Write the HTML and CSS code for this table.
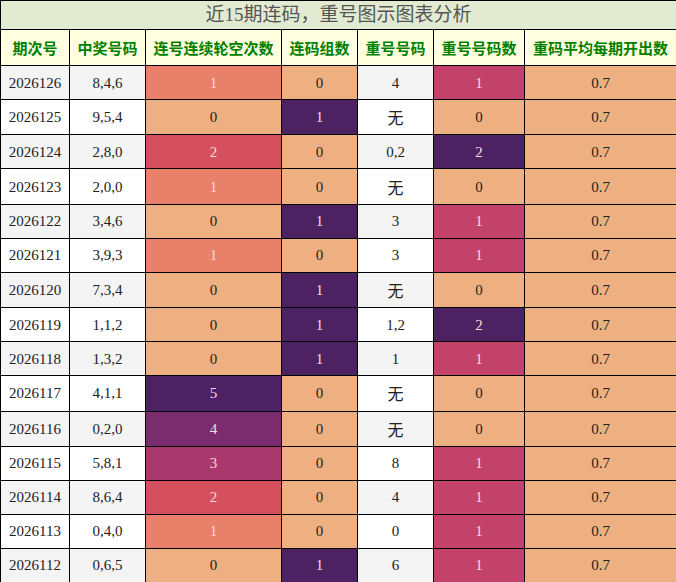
FILE: index.html
```html
<!DOCTYPE html>
<html lang="zh">
<head>
<meta charset="utf-8">
<title>近15期连码，重号图示图表分析</title>
<link rel="stylesheet" href="styles.css">
</head>
<body>
<table class="chart">
  <colgroup>
    <col class="c1"><col class="c2"><col class="c3"><col class="c4"><col class="c5"><col class="c6"><col class="c7">
  </colgroup>
  <thead>
    <tr class="title-row"><th colspan="7" class="title">近15期连码，重号图示图表分析</th></tr>
    <tr class="head-row">
      <th>期次号</th><th>中奖号码</th><th>连号连续轮空次数</th><th>连码组数</th><th>重号号码</th><th>重号号码数</th><th>重码平均每期开出数</th>
    </tr>
  </thead>
  <tbody>
    <tr class="odd"><td>2026126</td><td>8,4,6</td><td class="h1 lt">1</td><td class="h0">0</td><td>4</td><td class="p1 lt">1</td><td class="h0">0.7</td></tr>
    <tr class="even tall"><td>2026125</td><td>9,5,4</td><td class="h0">0</td><td class="d lt">1</td><td class="cjk">无</td><td class="h0">0</td><td class="h0">0.7</td></tr>
    <tr class="odd"><td>2026124</td><td>2,8,0</td><td class="h2 lt">2</td><td class="h0">0</td><td>0,2</td><td class="d lt">2</td><td class="h0">0.7</td></tr>
    <tr class="even tall"><td>2026123</td><td>2,0,0</td><td class="h1 lt">1</td><td class="h0">0</td><td class="cjk">无</td><td class="h0">0</td><td class="h0">0.7</td></tr>
    <tr class="odd"><td>2026122</td><td>3,4,6</td><td class="h0">0</td><td class="d lt">1</td><td>3</td><td class="p1 lt">1</td><td class="h0">0.7</td></tr>
    <tr class="even"><td>2026121</td><td>3,9,3</td><td class="h1 lt">1</td><td class="h0">0</td><td>3</td><td class="p1 lt">1</td><td class="h0">0.7</td></tr>
    <tr class="odd tall"><td>2026120</td><td>7,3,4</td><td class="h0">0</td><td class="d lt">1</td><td class="cjk">无</td><td class="h0">0</td><td class="h0">0.7</td></tr>
    <tr class="even"><td>2026119</td><td>1,1,2</td><td class="h0">0</td><td class="d lt">1</td><td>1,2</td><td class="d lt">2</td><td class="h0">0.7</td></tr>
    <tr class="odd"><td>2026118</td><td>1,3,2</td><td class="h0">0</td><td class="d lt">1</td><td>1</td><td class="p1 lt">1</td><td class="h0">0.7</td></tr>
    <tr class="even tall"><td>2026117</td><td>4,1,1</td><td class="d lt">5</td><td class="h0">0</td><td class="cjk">无</td><td class="h0">0</td><td class="h0">0.7</td></tr>
    <tr class="odd tall"><td>2026116</td><td>0,2,0</td><td class="h4 lt">4</td><td class="h0">0</td><td class="cjk">无</td><td class="h0">0</td><td class="h0">0.7</td></tr>
    <tr class="even"><td>2026115</td><td>5,8,1</td><td class="h3 lt">3</td><td class="h0">0</td><td>8</td><td class="p1 lt">1</td><td class="h0">0.7</td></tr>
    <tr class="odd"><td>2026114</td><td>8,6,4</td><td class="h2 lt">2</td><td class="h0">0</td><td>4</td><td class="p1 lt">1</td><td class="h0">0.7</td></tr>
    <tr class="even"><td>2026113</td><td>0,4,0</td><td class="h1 lt">1</td><td class="h0">0</td><td>0</td><td class="p1 lt">1</td><td class="h0">0.7</td></tr>
    <tr class="odd"><td>2026112</td><td>0,6,5</td><td class="h0">0</td><td class="d lt">1</td><td>6</td><td class="p1 lt">1</td><td class="h0">0.7</td></tr>
  </tbody>
</table>
</body>
</html>
```

FILE: styles.css
```css
html, body {
  margin: 0;
  padding: 0;
  background: #ffffff;
}

.chart {
  width: 676px;
  border-collapse: collapse;
  table-layout: fixed;
  font-family: "Liberation Serif", "Noto Sans CJK SC", serif;
  font-size: 15px;
  color: #222222;
  border: 1px solid #000;
}

.c1 { width: 69px; }
.c2 { width: 76px; }
.c3 { width: 136px; }
.c4 { width: 76px; }
.c5 { width: 76px; }
.c6 { width: 91px; }
.c7 { width: 152px; }

.chart th,
.chart td {
  border: 1px solid #000;
  padding: 0;
  text-align: center;
  vertical-align: middle;
}

.title-row { height: 29px; }

.title {
  background: #e2ebd1;
  color: #555555;
  font-family: "Liberation Serif", "Noto Sans CJK SC", serif;
  font-size: 19px;
  font-weight: normal;
  line-height: 22px;
}

.head-row { height: 36px; }

.head-row th {
  background: #ffffe0;
  color: #008000;
  font-family: "Noto Sans CJK SC", sans-serif;
  font-weight: bold;
  font-size: 15px;
  line-height: 18px;
}

.chart td { line-height: 18px; }

.chart tbody tr { height: 34px; }
.chart tbody tr.tall { height: 35.4px; }

.odd td { background: #f4f4f4; }
.even td { background: #ffffff; }

.cjk {
  font-family: "Noto Sans CJK SC", sans-serif;
  font-size: 16px;
}

.chart td.h0 { background: #eeb080; }
.chart td.h1 { background: #e8806a; }
.chart td.h2 { background: #d4505f; }
.chart td.h3 { background: #a9386c; }
.chart td.h4 { background: #7b2c6e; }
.chart td.d  { background: #4d2262; }
.chart td.p1 { background: #c3426a; }

.chart td.lt { color: #f5dede; }
```
